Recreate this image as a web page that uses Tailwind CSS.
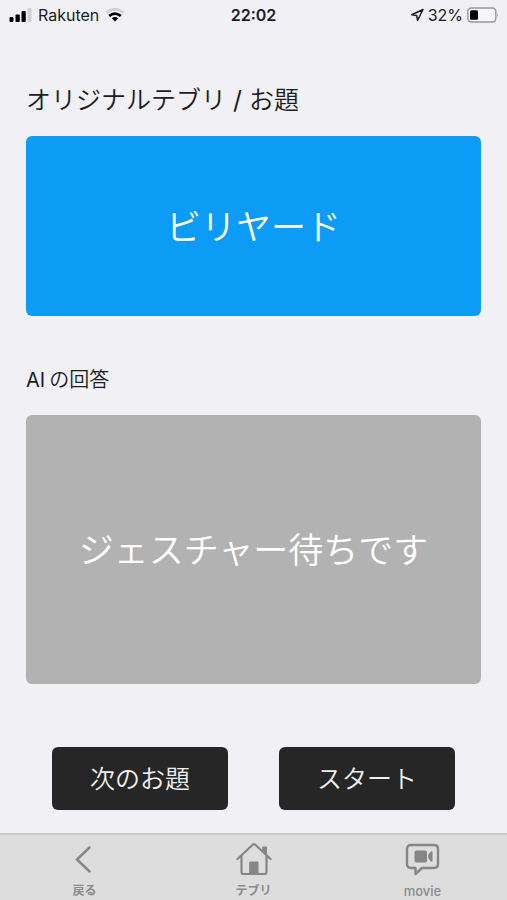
<!DOCTYPE html>
<html lang="ja">
<head>
<meta charset="utf-8">
<meta name="viewport" content="width=device-width, initial-scale=1">
<title>テブリ</title>
<script src="https://cdn.jsdelivr.net/npm/@tailwindcss/browser@4"></script>
</head>
<body class="flex min-h-screen flex-col bg-[#f1f0f5] font-['Inter','Noto_Sans_CJK_JP',sans-serif] text-[#1c1c1e]">
  <header class="grid h-[30px] grid-cols-3 items-center px-2 text-base leading-5">
    <div class="flex items-center gap-1.5">
      <svg class="h-[14px] w-6 shrink-0" viewBox="0 0 24 14" aria-hidden="true">
        <rect x="1.500" y="9" width="4" height="5" rx="1" fill="#000"/>
        <rect x="7.500" y="6.500" width="4.300" height="7.500" rx="1" fill="#000"/>
        <rect x="13.500" y="3" width="4.300" height="11" rx="1" fill="#000"/>
        <rect x="19.500" y="0" width="4" height="14" rx="1" fill="#d0d0d4"/>
      </svg>
      <span>Rakuten</span>
      <svg class="h-[14px] w-5 shrink-0" viewBox="0 0 20 14" fill="none" aria-hidden="true">
        <path d="M1.500 4.800Q10-2.400 18.500 4.800" stroke="#cfcfd3" stroke-width="2.600"/>
        <path d="M4.200 8Q10 3.200 15.800 8" stroke="#000" stroke-width="2.700"/>
        <path d="M6.800 10.300Q10 7.700 13.200 10.300L10 13.600Z" fill="#000"/>
      </svg>
    </div>
    <time class="text-center font-semibold">22:02</time>
    <div class="flex items-center justify-end gap-1">
      <svg class="h-[14px] w-[14px] shrink-0" viewBox="0 0 14 14" fill="none" stroke="#1c1c1e" stroke-width="1.500" stroke-linejoin="round" aria-hidden="true"><path d="M13 1.500 1.800 6.800 6.700 7.600 7.500 12.500Z"/></svg>
      <span>32%</span>
      <svg class="h-4 w-8 shrink-0" viewBox="0 0 32 16" aria-hidden="true">
        <rect x=".8" y="1" width="28" height="14" rx="3.500" fill="#f7f7f9" stroke="#98989c" stroke-width="1.400"/>
        <rect x="3" y="3.200" width="8" height="9.600" rx="1.500" fill="#000"/>
        <path d="M30.300 5.500q1.700 2.500 0 5Z" fill="#98989c"/>
      </svg>
    </div>
  </header>

  <main class="flex grow flex-col px-[26px] pt-[52px]">
    <h1 class="text-[25px] leading-9 font-[350]">オリジナルテブリ <span class="font-normal">/</span> お題</h1>
    <section class="mt-[18px] flex h-[180px] items-center justify-center rounded-md bg-[#0c9bf5] pt-0.5 text-[35px] font-[350] leading-none text-white">
      <p>ビリヤード</p>
    </section>
    <h2 class="mt-12 flex gap-1 text-xl leading-8 font-[350]"><span class="font-normal">AI</span><span>の回答</span></h2>
    <section class="mt-[19px] flex h-[269px] items-center justify-center rounded-md bg-[#b2b2b2] pt-0.5 text-[35px] font-[350] leading-none text-white">
      <p>ジェスチャー待ちです</p>
    </section>
    <div class="mt-[63px] grid grid-cols-2 gap-[51px] px-[26px] pb-[23px]">
      <button type="button" class="h-[63px] rounded-md bg-[#262626] pt-0.5 text-[25px] font-[350] text-[#f0f0f0]">次のお題</button>
      <button type="button" class="h-[63px] rounded-md bg-[#262626] pt-0.5 text-[25px] font-[350] text-[#f0f0f0]">スタート</button>
    </div>
  </main>

  <nav class="grid h-[67px] grid-cols-3 border-t-2 border-[#cbcbcd] bg-[#dddddd] text-xs leading-4 font-semibold text-[#8b8b8b]">
    <a href="#back" class="flex flex-col items-center justify-end gap-1.5 pb-px">
      <svg class="h-9 w-9" viewBox="0 0 36 36" fill="none" stroke="#868686" stroke-width="2.500" stroke-linecap="round" aria-hidden="true"><path d="M22.500 6.500 10 18.500 22.500 30.500"/></svg>
      <span>戻る</span>
    </a>
    <a href="#home" class="flex flex-col items-center justify-end gap-1.5 pb-px">
      <svg class="h-9 w-9" viewBox="0 0 36 36" fill="none" stroke="#868686" stroke-width="2.200" stroke-linecap="round" stroke-linejoin="round" aria-hidden="true">
        <path d="M1.500 18 17 3.500Q18 2.600 19 3.500L34.500 18M5.500 15.500V31Q5.500 33 7.500 33H28.500Q30.500 33 30.500 31V15.500"/>
        <path d="M27 6H30.500V14L27 10Z" fill="#868686" stroke-width="1"/>
        <path d="M14 21H22V33H14Z" fill="#868686" stroke-width="1"/>
      </svg>
      <span>テブリ</span>
    </a>
    <a href="#movie" class="flex flex-col items-center justify-end gap-1.5 pb-px text-[13px] font-medium">
      <svg class="h-9 w-9" viewBox="0 0 36 36" fill="none" stroke="#868686" stroke-width="2.400" stroke-linejoin="round" aria-hidden="true">
        <path d="M6 4H29Q33 4 33 8V23Q33 27 29 27H17L10.500 33V27H6Q2 27 2 23V8Q2 4 6 4Z"/>
        <rect x="10" y="10" width="11.500" height="11" rx="1" fill="#868686" stroke-width="1"/>
        <path d="M27 10.500V20.500Q23.500 18.500 23.500 15.500T27 10.500Z" fill="#868686" stroke-width="1"/>
      </svg>
      <span>movie</span>
    </a>
  </nav>
</body>
</html>
